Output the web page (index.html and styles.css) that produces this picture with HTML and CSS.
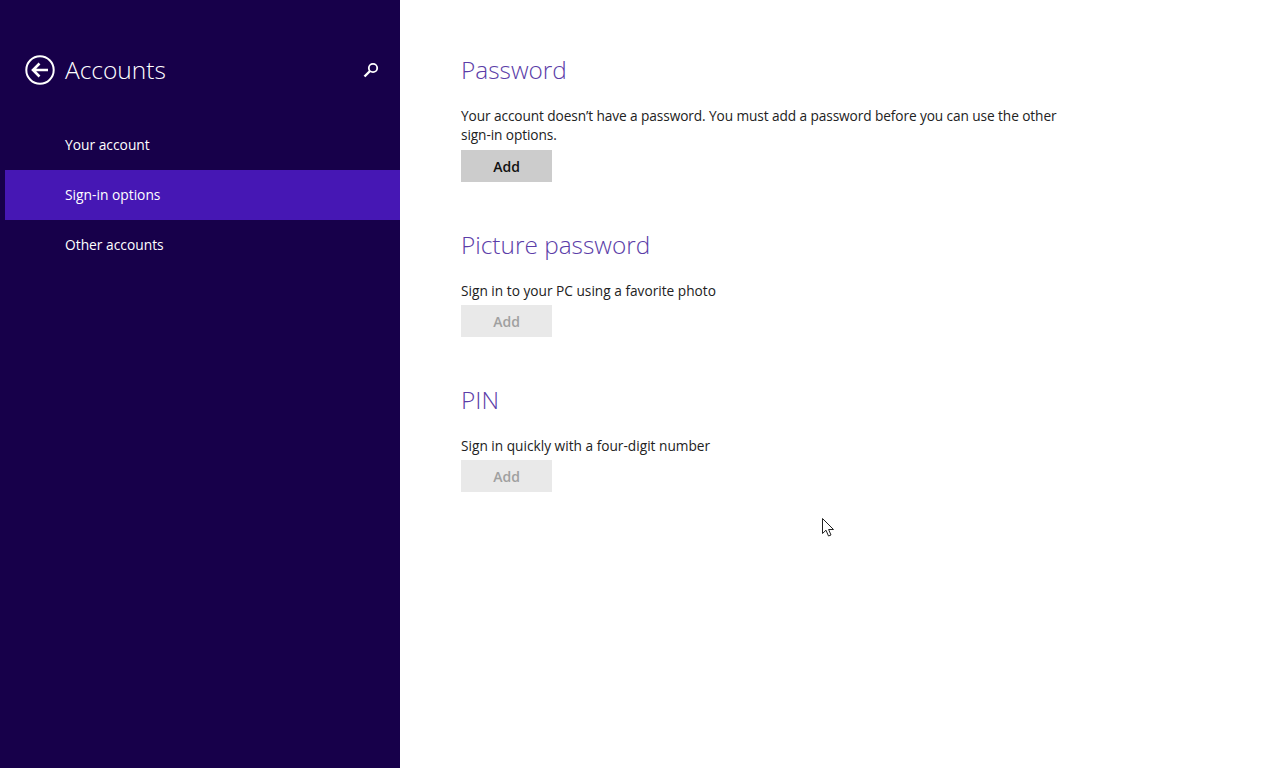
FILE: index.html
```html
<!DOCTYPE html>
<html lang="en">
  <head>
    <meta charset="UTF-8" />
    <title>Accounts</title>
    <link rel="stylesheet" href="styles.css">
  </head>
  <body>
    <div class="sidebar">
      <div class="sidebar-head">
        <svg class="back-icon" width="30" height="30" viewBox="0 0 30 30">
          <circle cx="15" cy="15" r="13.7" fill="none" stroke="#fff" stroke-width="2" />
          <path d="M23 15H8M14.5 8.5L8 15l6.500 6.500" fill="none" stroke="#fff" stroke-width="2.600" />
        </svg>
        <h1 class="sidebar-title">Accounts</h1>
        <svg class="search-icon" width="16" height="16" viewBox="0 0 16 16">
          <circle cx="10" cy="6" r="4.200" fill="none" stroke="#fff" stroke-width="1.800" />
          <path d="M7 9L1.500 14.500" fill="none" stroke="#fff" stroke-width="2.400" />
        </svg>
      </div>
      <nav class="nav">
        <a class="nav-item">Your account</a>
        <a class="nav-item active">Sign-in options</a>
        <a class="nav-item">Other accounts</a>
      </nav>
    </div>

    <div class="content">
      <section class="group group-long">
        <h2>Password</h2>
        <p>Your account doesn’t have a password. You must add a password before you can use the other sign-in options.</p>
        <button class="btn">Add</button>
      </section>
      <section class="group">
        <h2>Picture password</h2>
        <p>Sign in to your PC using a favorite photo</p>
        <button class="btn" disabled>Add</button>
      </section>
      <section class="group">
        <h2>PIN</h2>
        <p>Sign in quickly with a four-digit number</p>
        <button class="btn" disabled>Add</button>
      </section>
    </div>

    <svg class="cursor" width="14" height="21" viewBox="0 0 14 21">
      <path d="M1.500 1.500V16.500L5 13.200L7.500 19L10 18L7.600 12.500H12.500Z" fill="#fff" stroke="#222" stroke-width="1" />
    </svg>
  </body>
</html>
```

FILE: styles.css
```css
html, body {
  height: 100%;
}
body {
  margin: 0;
  display: flex;
  background: #fff;
  font-family: "Open Sans", "Noto Sans", sans-serif;
  overflow: hidden;
}

.sidebar {
  width: 400px;
  flex: none;
  background: #17004a;
  color: #fff;
}
.sidebar-head {
  display: flex;
  align-items: center;
  height: 30px;
  padding: 55px 21px 0 25px;
}
.sidebar-title {
  margin: 0 0 0 10px;
  flex: 1;
  font-size: 24.5px;
  font-weight: 300;
  line-height: 30px;
}
.search-icon {
  margin-top: -1px;
}

.nav {
  margin-top: 35px;
  padding-left: 5px;
}
.nav-item {
  display: block;
  height: 50px;
  padding-left: 60px;
  font-size: 13.8px;
  line-height: 49px;
}
.nav-item.active {
  background: #4617b4;
}

.content {
  flex: 1;
  padding: 53px 0 0 61px;
}
.group {
  width: 612px;
  margin-bottom: 46px;
  color: #222;
}
.group h2 {
  margin: 0 0 19px;
  font-size: 24.4px;
  font-weight: 300;
  line-height: 34px;
  color: #5b3da8;
}
.group p {
  margin: 0 0 5px;
  font-size: 13.7px;
  line-height: 19px;
}
.group-long p {
  margin-bottom: 6px;
  letter-spacing: -0.1px;
}
.btn {
  display: block;
  width: 91px;
  height: 32px;
  padding: 0;
  border: 0;
  background: #ccc;
  color: #111;
  font-family: inherit;
  font-size: 14px;
  font-weight: 600;
}
.btn:disabled {
  background: #e9e9e9;
  color: #a0a0a0;
}

/* mouse pointer, sits over the page */
.cursor {
  position: absolute;
  left: 821px;
  top: 517px;
}
```
